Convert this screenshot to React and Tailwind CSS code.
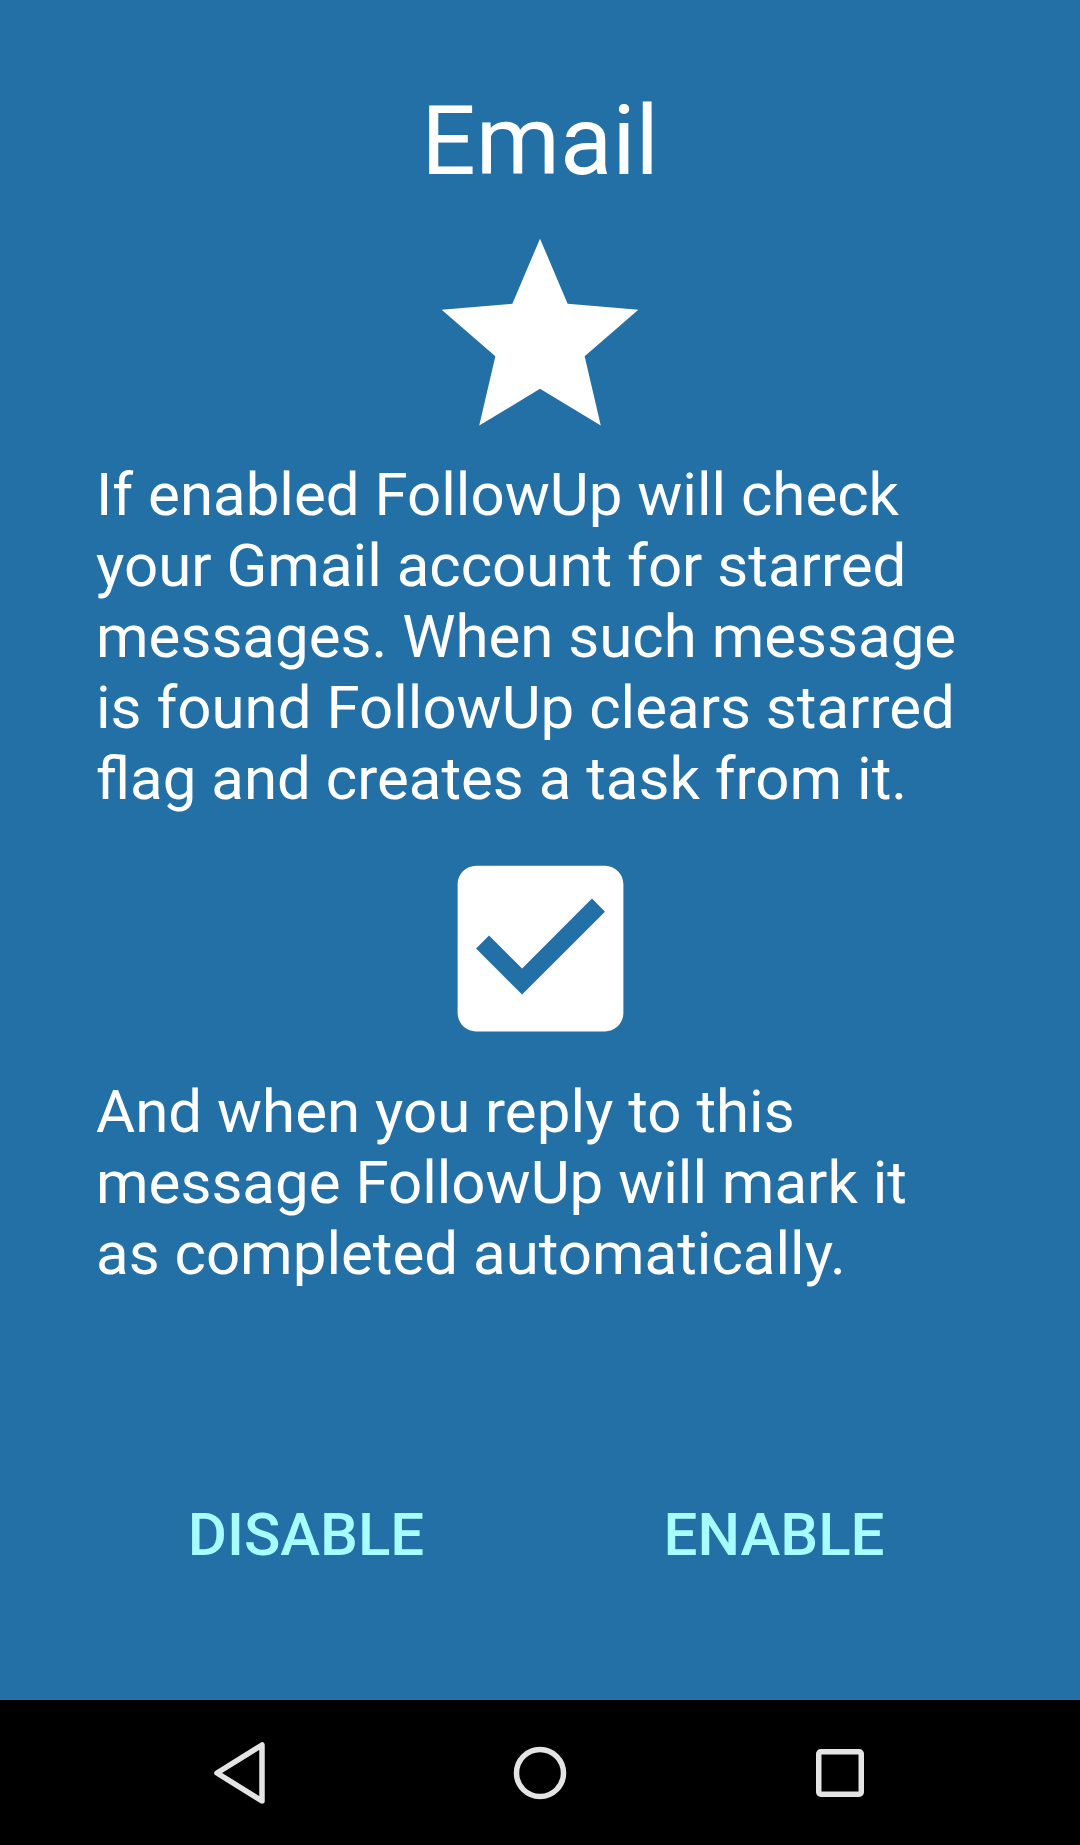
import React from 'react';

const StarIcon = ({ className }) => (
  <svg viewBox="0 0 24 24" className={className} fill="#ffffff">
    <path d="M12 17.27L18.18 21l-1.64-7.03L22 9.24l-7.19-.61L12 2 9.19 8.63 2 9.24l5.46 4.73L5.82 21z" />
  </svg>
);

const CheckBoxIcon = ({ className }) => (
  <svg viewBox="0 0 24 24" className={className} fill="#ffffff">
    <path d="M19 3H5c-1.11 0-2 .9-2 2v14c0 1.1.89 2 2 2h14c1.11 0 2-.9 2-2V5c0-1.1-.89-2-2-2zm-9 14l-5-5 1.41-1.41L10 14.17l7.59-7.59L19 8l-9 9z" />
  </svg>
);

const NavBar = () => (
  <nav className="h-[145px] bg-black grid grid-cols-3 px-[90px] items-center">
    {/* back */}
    <div className="flex justify-center">
      <svg width="60" height="64" viewBox="0 0 60 64" fill="none" stroke="#e4e4e4" strokeWidth="5.5" strokeLinejoin="round">
        <path d="M7 32 L52 4 L52 60 Z" />
      </svg>
    </div>
    {/* home */}
    <div className="flex justify-center">
      <svg width="56" height="56" viewBox="0 0 56 56" fill="none" stroke="#e4e4e4" strokeWidth="5.5">
        <circle cx="28" cy="28" r="23.5" />
      </svg>
    </div>
    {/* recents */}
    <div className="flex justify-center">
      <svg width="52" height="52" viewBox="0 0 52 52" fill="none" stroke="#e4e4e4" strokeWidth="5.5">
        <rect x="4.75" y="4.75" width="42.5" height="42.5" rx="2" />
      </svg>
    </div>
  </nav>
);

export default function App() {
  return (
    <div className="w-[1080px] h-[1845px] flex flex-col bg-[#2370a7] font-['Roboto',sans-serif] text-white">
      <main className="flex-1 flex flex-col">
        <div className="flex flex-col items-center px-24 pt-[85px]">
          <h1 className="text-[96px] leading-[112px] font-normal">Email</h1>
          <StarIcon className="mt-[22px] w-[236px] h-[236px]" />
          <p className="mt-[4px] self-stretch text-[60px] leading-[71px]">
            If enabled FollowUp will check your Gmail account for starred messages. When such message is found FollowUp clears starred flag and creates a task from it.
          </p>
          <CheckBoxIcon className="mt-[24px] w-[221px] h-[221px]" />
          <p className="mt-[17px] self-stretch text-[60px] leading-[71px]">
            And when you reply to this message FollowUp will mark it as completed automatically.
          </p>
        </div>

        <div className="mt-[210px] grid grid-cols-2 px-[72px]">
          <button className="text-[60px] leading-[71px] font-medium text-[#a8fcff] uppercase">
            Disable
          </button>
          <button className="text-[60px] leading-[71px] font-medium text-[#a8fcff] uppercase">
            Enable
          </button>
        </div>
      </main>
      <NavBar />
    </div>
  );
}
